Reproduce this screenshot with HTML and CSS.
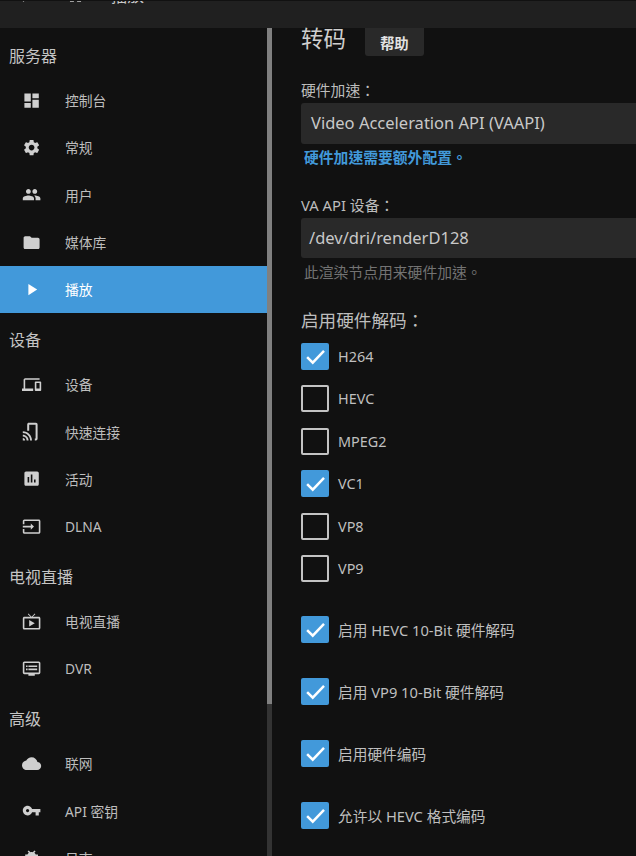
FILE: index.html
```html
<!DOCTYPE html>
<html lang="zh-TW">
<head>
    <meta charset="UTF-8">
    <title>播放</title>
    <link rel="stylesheet" href="styles.css">
</head>
<body>
    <header class="topbar">
        <div class="topbar-row">
            <svg class="top-icon" viewBox="0 0 24 24"><path d="M20 11H7.83l5.59-5.59L12 4l-8 8 8 8 1.41-1.41L7.83 13H20z"/></svg>
            <svg class="top-icon" viewBox="0 0 24 24"><path d="M10 20v-6h4v6h5v-8h3L12 3 2 12h3v8z"/></svg>
            <span class="top-title">播放</span>
        </div>
    </header>
    <div class="layout">
        <nav class="sidebar">
            <h3 class="nav-title">服务器</h3>
            <a class="nav-item"><svg class="nav-icon" viewBox="0 0 24 24"><path d="M3 13h8V3H3v10zm0 8h8v-6H3v6zm10 0h8V11h-8v10zm0-18v6h8V3h-8z"/></svg>控制台</a>
            <a class="nav-item"><svg class="nav-icon" viewBox="0 0 24 24"><path d="M19.14 12.94c.04-.3.06-.61.06-.94 0-.32-.02-.64-.07-.94l2.03-1.58c.18-.14.23-.41.12-.61l-1.92-3.32c-.12-.22-.37-.29-.59-.22l-2.39.96c-.5-.38-1.03-.7-1.62-.94l-.36-2.54c-.04-.24-.24-.41-.48-.41h-3.84c-.24 0-.43.17-.47.41l-.36 2.54c-.59.24-1.13.57-1.62.94l-2.39-.96c-.22-.08-.47 0-.59.22L2.74 8.87c-.12.21-.08.47.12.61l2.03 1.58c-.05.3-.09.63-.09.94s.02.64.07.94l-2.03 1.58c-.18.14-.23.41-.12.61l1.92 3.32c.12.22.37.29.59.22l2.39-.96c.5.38 1.03.7 1.62.94l.36 2.54c.05.24.24.41.48.41h3.84c.24 0 .44-.17.47-.41l.36-2.54c.59-.24 1.13-.56 1.62-.94l2.39.96c.22.08.47 0 .59-.22l1.92-3.32c.12-.22.07-.47-.12-.61l-2.01-1.58zM12 15.6c-1.98 0-3.6-1.62-3.6-3.6s1.62-3.6 3.6-3.6 3.6 1.62 3.6 3.6-1.62 3.6-3.6 3.6z"/></svg>常规</a>
            <a class="nav-item"><svg class="nav-icon" viewBox="0 0 24 24"><path d="M16 11c1.66 0 2.99-1.34 2.99-3S17.66 5 16 5c-1.66 0-3 1.34-3 3s1.34 3 3 3zm-8 0c1.66 0 2.99-1.34 2.99-3S9.66 5 8 5C6.34 5 5 6.34 5 8s1.34 3 3 3zm0 2c-2.33 0-7 1.17-7 3.5V19h14v-2.5c0-2.33-4.67-3.5-7-3.5zm8 0c-.29 0-.62.02-.97.05 1.16.84 1.97 1.97 1.97 3.45V19h6v-2.5c0-2.33-4.67-3.5-7-3.5z"/></svg>用户</a>
            <a class="nav-item"><svg class="nav-icon" viewBox="0 0 24 24"><path d="M10 4H4c-1.1 0-1.99.9-1.99 2L2 18c0 1.1.9 2 2 2h16c1.1 0 2-.9 2-2V8c0-1.1-.9-2-2-2h-8l-2-2z"/></svg>媒体库</a>
            <a class="nav-item active"><svg class="nav-icon" viewBox="0 0 24 24"><path d="M8 5v14l11-7z"/></svg>播放</a>

            <h3 class="nav-title">设备</h3>
            <a class="nav-item"><svg class="nav-icon" viewBox="0 0 24 24"><path d="M4 6h18V4H4c-1.1 0-2 .9-2 2v11H0v3h14v-3H4V6zm19 2h-6c-.55 0-1 .45-1 1v10c0 .55.45 1 1 1h6c.55 0 1-.45 1-1V9c0-.55-.45-1-1-1zm-1 9h-4v-7h4v7z"/></svg>设备</a>
            <a class="nav-item"><svg class="nav-icon" viewBox="0 0 24 24"><path d="M6.5 11V3c0-1.2 1-2 2-2h9c1.2 0 2 .9 2 2v18c0 1.1-.9 2-2 2h-1.500v-2.500H17V3.500H9V11zM1 20v3h3c0-1.660-1.340-3-3-3zm0-4.200v2.400c2.760 0 4.800 2.040 4.800 4.800h2.400c0-3.870-3.330-7.200-7.200-7.200zm0-4.300v2.400c4.970 0 9.100 4.130 9.100 9.100h2.400c0-6.280-5.220-11.500-11.500-11.500z"/></svg>快速连接</a>
            <a class="nav-item"><svg class="nav-icon" viewBox="0 0 24 24"><path d="M19 3H5c-1.1 0-2 .9-2 2v14c0 1.1.9 2 2 2h14c1.1 0 2-.9 2-2V5c0-1.1-.9-2-2-2zM9 17H7v-7h2v7zm4 0h-2V7h2v10zm4 0h-2v-4h2v4z"/></svg>活动</a>
            <a class="nav-item"><svg class="nav-icon" viewBox="0 0 24 24"><path d="M21 3.01H3c-1.1 0-2 .9-2 2V9h2V4.99h18v14.03H3V15H1v4.01c0 1.1.9 1.98 2 1.98h18c1.1 0 2-.88 2-1.98v-14c0-1.11-.9-2-2-2zM11 16l4-4-4-4v3H1v2h10v3z"/></svg>DLNA</a>

            <h3 class="nav-title">电视直播</h3>
            <a class="nav-item"><svg class="nav-icon" viewBox="0 0 24 24"><path d="M21 6h-7.59l3.29-3.29L16 2l-4 4-4-4-.71.71L10.59 6H3c-1.1 0-2 .89-2 2v12c0 1.1.9 2 2 2h18c1.1 0 2-.9 2-2V8c0-1.11-.9-2-2-2zm0 14H3V8h18v12zM9 10v8l7-4z"/></svg>电视直播</a>
            <a class="nav-item"><svg class="nav-icon" viewBox="0 0 24 24"><path d="M21 3H3c-1.1 0-2 .9-2 2v12c0 1.1.9 2 2 2h5v2h8v-2h5c1.1 0 1.99-.9 1.99-2L23 5c0-1.1-.9-2-2-2zm0 14H3V5h18v12zm-2-9H8v2h11V8zm0 4H8v2h11v-2zM7 8H5v2h2V8zm0 4H5v2h2v-2z"/></svg>DVR</a>

            <h3 class="nav-title">高级</h3>
            <a class="nav-item"><svg class="nav-icon" viewBox="0 0 24 24"><path d="M19.35 10.04C18.67 6.59 15.64 4 12 4 9.11 4 6.6 5.64 5.35 8.04 2.34 8.36 0 10.91 0 14c0 3.31 2.69 6 6 6h13c2.76 0 5-2.24 5-5 0-2.64-2.05-4.78-4.65-4.96z"/></svg>联网</a>
            <a class="nav-item"><svg class="nav-icon" viewBox="0 0 24 24"><path d="M12.65 10C11.83 7.67 9.61 6 7 6c-3.31 0-6 2.69-6 6s2.69 6 6 6c2.61 0 4.83-1.67 5.65-4H17v4h4v-4h2v-4H12.65zM7 14c-1.1 0-2-.9-2-2s.9-2 2-2 2 .9 2 2-.9 2-2 2z"/></svg>API 密钥</a>
            <a class="nav-item"><svg class="nav-icon" viewBox="0 0 24 24"><path d="M20 8h-2.81c-.45-.78-1.07-1.45-1.82-1.96L17 4.41 15.59 3l-2.17 2.17C12.96 5.06 12.49 5 12 5c-.49 0-.96.06-1.41.17L8.41 3 7 4.41l1.62 1.63C7.88 6.55 7.26 7.22 6.81 8H4v2h2.09c-.05.33-.09.66-.09 1v1H4v2h2v1c0 .34.04.67.09 1H4v2h2.81c1.04 1.79 2.97 3 5.19 3s4.15-1.21 5.19-3H20v-2h-2.09c.05-.33.09-.66.09-1v-1h2v-2h-2v-1c0-.34-.04-.67-.09-1H20V8zm-6 8h-4v-2h4v2zm0-4h-4v-2h4v2z"/></svg>日志</a>
        </nav>
        <div class="scrollbar"><div class="scrollbar-thumb"></div></div>
        <main class="content">
            <div class="title-row">
                <h2 class="page-title">转码</h2>
                <button class="help-btn">帮助</button>
            </div>

            <div class="field field-first">
                <label class="field-label">硬件加速：</label>
                <div class="select">Video Acceleration API (VAAPI)</div>
                <div class="hint hint-link">硬件加速需要额外配置。</div>
            </div>

            <div class="field field-second">
                <label class="field-label">VA API 设备：</label>
                <div class="select select-short">/dev/dri/renderD128</div>
                <div class="hint">此渲染节点用来硬件加速。</div>
            </div>

            <h3 class="check-title">启用硬件解码：</h3>
            <div class="check-list">
                <label class="check-row"><span class="box on"><svg viewBox="0 0 24 24"><path d="M5 12.5l5 5L20 7"/></svg></span>H264</label>
                <label class="check-row"><span class="box"></span>HEVC</label>
                <label class="check-row"><span class="box"></span>MPEG2</label>
                <label class="check-row"><span class="box on"><svg viewBox="0 0 24 24"><path d="M5 12.5l5 5L20 7"/></svg></span>VC1</label>
                <label class="check-row"><span class="box"></span>VP8</label>
                <label class="check-row"><span class="box"></span>VP9</label>
            </div>
            <div class="check-list-wide">
                <label class="check-row"><span class="box on"><svg viewBox="0 0 24 24"><path d="M5 12.5l5 5L20 7"/></svg></span>启用 HEVC 10-Bit 硬件解码</label>
                <label class="check-row"><span class="box on"><svg viewBox="0 0 24 24"><path d="M5 12.5l5 5L20 7"/></svg></span>启用 VP9 10-Bit 硬件解码</label>
                <label class="check-row"><span class="box on"><svg viewBox="0 0 24 24"><path d="M5 12.5l5 5L20 7"/></svg></span>启用硬件编码</label>
                <label class="check-row"><span class="box on"><svg viewBox="0 0 24 24"><path d="M5 12.5l5 5L20 7"/></svg></span>允许以 HEVC 格式编码</label>
            </div>
        </main>
    </div>
</body>
</html>
```
FILE: styles.css
```css
html, body {
    margin: 0;
    padding: 0;
    height: 856px;
    overflow: hidden;
}
body {
    display: flex;
    flex-direction: column;
    background-color: #111111;
    color: #c8c8c8;
    font-family: "Noto Sans", "Noto Sans CJK TC", sans-serif;
    font-size: 14.4px;
}
h2, h3 {
    margin: 0;
    font-weight: 400;
}

/* top bar, its contents are cut off by the window */
.topbar {
    flex: none;
    height: 27px;
    border-top: 1px solid #111111;
    background-color: #202020;
    overflow: hidden;
}
.topbar-row {
    display: flex;
    align-items: center;
    height: 24px;
    margin-top: -18px;
    padding-left: 14px;
}
.top-icon {
    width: 19px;
    height: 19px;
    margin-right: 33px;
    fill: #cccccc;
}
.top-title {
    margin-left: -7px;
    font-size: 16.5px;
}

.layout {
    flex: 1;
    display: flex;
    min-height: 0;
}

/* sidebar */
.sidebar {
    flex: none;
    width: 267px;
    overflow: hidden;
}
.nav-title {
    height: 24px;
    line-height: 24px;
    margin: 15px 0 8.5px 9px;
    font-size: 16px;
    color: #c4c4c4;
}
.nav-title:first-child {
    margin-top: 16px;
}
.nav-item {
    display: flex;
    align-items: center;
    height: 47.33px;
    padding-left: 22.4px;
    font-size: 13.8px;
    color: #bdbdbd;
}
.nav-item.active {
    background-color: #4299da;
    color: #ffffff;
}
.nav-icon {
    flex: none;
    width: 19.2px;
    height: 19.2px;
    margin-right: 23.4px;
    fill: #cfcfcf;
}
.active .nav-icon {
    fill: #ffffff;
}

.scrollbar {
    flex: none;
    width: 5px;
    background-color: #333333;
}
.scrollbar-thumb {
    height: 676px;
    background-color: #808080;
}

/* settings form */
.content {
    flex: 1;
    min-width: 0;
    padding-left: 29px;
}
.title-row {
    display: flex;
    height: 28px;
}
.page-title {
    height: 22px;
    font-size: 22.4px;
    line-height: 22px;
    color: #cfcfcf;
}
.help-btn {
    width: 59px;
    height: 28px;
    margin-left: 19px;
    padding: 0;
    border: 0;
    border-radius: 0 0 3px 3px;
    background-color: #292929;
    color: #e2e2e2;
    font-family: inherit;
    font-size: 14.4px;
    font-weight: 700;
}
.field-first {
    margin-top: 23px;
}
.field-second {
    margin-top: 27px;
}
.field-label {
    display: block;
    height: 24px;
    line-height: 22px;
    font-size: 14.8px;
    color: #bdbdbd;
}
.select {
    box-sizing: border-box;
    width: 100%;
    height: 41px;
    line-height: 40px;
    padding-left: 10px;
    border-radius: 3px 0 0 3px;
    background-color: #292929;
    color: #c8c8c8;
    font-size: 16.5px;
    white-space: nowrap;
}
.select-short {
    padding-left: 8px;
    height: 40px;
}
.hint {
    height: 20px;
    margin: 4px 0 0 3px;
    line-height: 20px;
    color: #737373;
    font-size: 14.8px;
}
.hint-link {
    margin-top: 3px;
    color: #4299da;
    font-weight: 700;
}
.check-title {
    height: 24px;
    margin-top: 26px;
    line-height: 24px;
    font-size: 17.6px;
    color: #bdbdbd;
}
.check-list {
    margin-top: 3.4px;
}
.check-row {
    display: flex;
    align-items: center;
    height: 42.4px;
    color: #bfbfbf;
}
.check-list-wide {
    margin-top: 9px;
}
.check-list-wide .check-row {
    height: 61.8px;
    font-size: 14.7px;
}
.box {
    flex: none;
    box-sizing: border-box;
    width: 28px;
    height: 27px;
    margin-right: 9px;
    border: 2px solid #c4c4c4;
    border-radius: 2px;
}
.box.on {
    border: 0;
    background-color: #4299da;
}
.box svg {
    display: block;
    width: 28px;
    height: 27px;
    fill: none;
    stroke: #ffffff;
    stroke-width: 2.2;
}
```
